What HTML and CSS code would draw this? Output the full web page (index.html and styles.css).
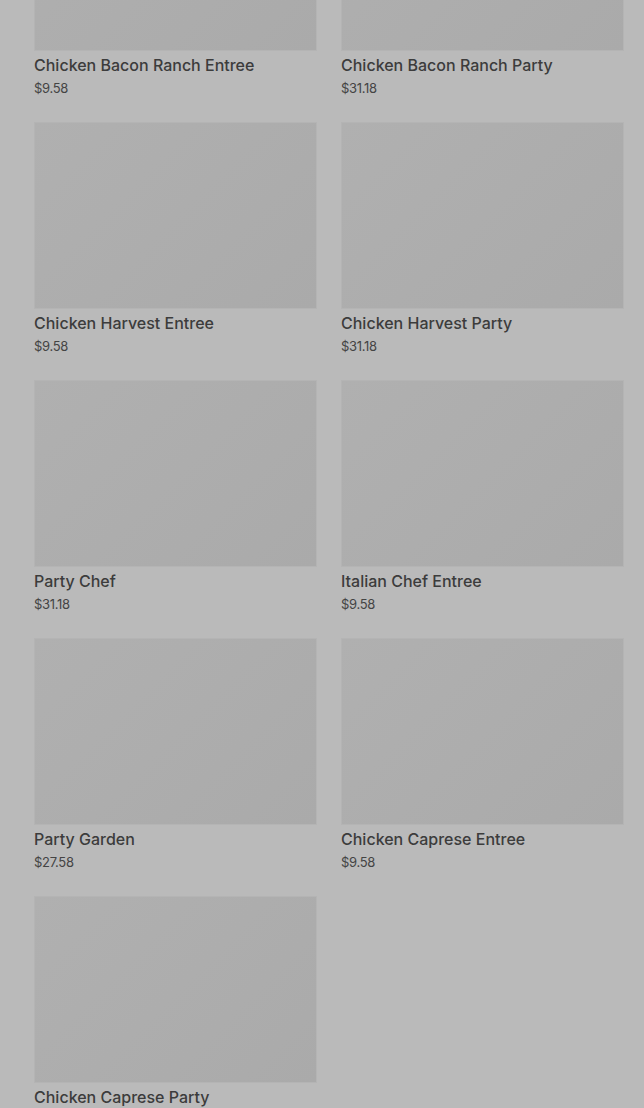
FILE: index.html
```html
<!DOCTYPE html>
<html lang="en">
<head>
  <meta charset="UTF-8" />
  <meta name="viewport" content="width=device-width, initial-scale=1" />
  <title>Menu</title>
  <link rel="stylesheet" href="styles.css">
</head>
<body>
  <div class="grid">
    <div class="card">
      <div class="thumb"></div>
      <div class="name">Chicken Bacon Ranch Entree</div>
      <div class="price">$9.58</div>
    </div>
    <div class="card">
      <div class="thumb"></div>
      <div class="name">Chicken Bacon Ranch Party</div>
      <div class="price">$31.18</div>
    </div>
    <div class="card">
      <div class="thumb"></div>
      <div class="name">Chicken Harvest Entree</div>
      <div class="price">$9.58</div>
    </div>
    <div class="card">
      <div class="thumb"></div>
      <div class="name">Chicken Harvest Party</div>
      <div class="price">$31.18</div>
    </div>
    <div class="card">
      <div class="thumb"></div>
      <div class="name">Party Chef</div>
      <div class="price">$31.18</div>
    </div>
    <div class="card">
      <div class="thumb"></div>
      <div class="name">Italian Chef Entree</div>
      <div class="price">$9.58</div>
    </div>
    <div class="card">
      <div class="thumb"></div>
      <div class="name">Party Garden</div>
      <div class="price">$27.58</div>
    </div>
    <div class="card">
      <div class="thumb"></div>
      <div class="name">Chicken Caprese Entree</div>
      <div class="price">$9.58</div>
    </div>
    <div class="card">
      <div class="thumb"></div>
      <div class="name">Chicken Caprese Party</div>
      <div class="price">$31.18</div>
    </div>
  </div>
</body>
</html>
```

FILE: styles.css
```css
body {
  font-family: Inter, Roboto, "Noto Sans", sans-serif;
  background: #bababa;
  margin: 0;
  height: 1108px;
  overflow: hidden;
}

.grid {
  display: grid;
  grid-template-columns: 283px 283px;
  column-gap: 24px;
  row-gap: 24px;
  padding: 0 20px 0 34px;
  margin-top: -136px;
}

.thumb {
  height: 185px;
  background: linear-gradient(135deg, #b0b0b0, #aaaaaa);
  border: 1px solid #b4b4b4;
}

.name {
  margin-top: 3px;
  font-size: 16px;
  font-weight: 500;
  line-height: 22px;
  color: #3c3c3c;
}

.price {
  margin-top: 2px;
  font-size: 13px;
  line-height: 20px;
  color: #444444;
  letter-spacing: -0.3px;
}
```
